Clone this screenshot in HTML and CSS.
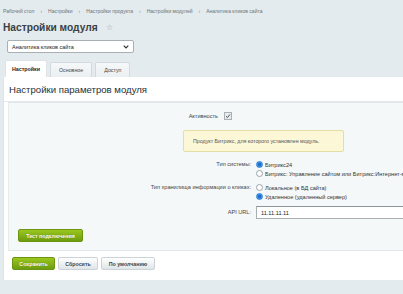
FILE: index.html
```html
<!DOCTYPE html>
<html lang="ru">
<head>
<meta charset="utf-8">
<link rel="stylesheet" href="styles.css">
</head>
<body>
<div class="page">
  <nav class="crumbs">
    <span>Рабочий стол</span><span class="sep">›</span>
    <span>Настройки</span><span class="sep">›</span>
    <span>Настройки продукта</span><span class="sep">›</span>
    <span>Настройки модулей</span><span class="sep">›</span>
    <span>Аналитика кликов сайта</span>
  </nav>
  <div class="title-row">
    <h1 class="title">Настройки модуля</h1>
    <span class="star">☆</span>
  </div>
  <div class="select-row">
    <div class="select">
      <span>Аналитика кликов сайта</span>
      <svg class="chev" width="6" height="4" viewBox="0 0 6 4"><path d="M0.7 0.7 L3 3 L5.3 0.7" fill="none" stroke="#333" stroke-width="1.2"/></svg>
    </div>
  </div>
  <div class="tabs">
    <div class="tab active">Настройки</div>
    <div class="tab">Основное</div>
    <div class="tab">Доступ</div>
  </div>
  <div class="panel">
    <div class="panel-head">Настройки параметров модуля</div>
    <div class="inner">
      <div class="row-active">
        <span class="lbl">Активность</span>
        <span class="check"><svg width="6" height="6" viewBox="0 0 6 6"><path d="M1 3.2 L2.5 4.6 L5 1.4" fill="none" stroke="#555" stroke-width="1"/></svg></span>
      </div>
      <div class="note">Продукт Битрикс, для которого установлен модуль.</div>
      <div class="form">
        <div class="flabel">Тип системы:</div>
        <div class="fval">
          <div class="opt"><span class="radio on"></span>Битрикс24</div>
          <div class="opt"><span class="radio"></span>Битрикс: Управление сайтом или Битрикс:Интернет-магазин</div>
        </div>
        <div class="flabel">Тип хранилища информации о кликах:</div>
        <div class="fval">
          <div class="opt"><span class="radio"></span>Локальное (в БД сайта)</div>
          <div class="opt"><span class="radio on"></span>Удаленное (удаленный сервер)</div>
        </div>
        <div class="flabel api">API URL:</div>
        <div class="fval"><div class="input">11.11.11.11</div></div>
      </div>
      <div class="test-row"><span class="btn green">Тест подключения</span></div>
    </div>
    <div class="actions">
      <span class="btn green">Сохранить</span>
      <span class="btn gray">Сбросить</span>
      <span class="btn gray">По умолчанию</span>
    </div>
  </div>
</div>
</body>
</html>
```
FILE: styles.css
```css
html, body {
  margin: 0;
  padding: 0;
  background: #e4ebee;
  overflow: hidden;
}
body {
  font-family: "Liberation Sans", Arial, sans-serif;
  color: #333;
}
.page {
  width: 520px;
  padding-top: 3px;
}
.crumbs {
  height: 16px;
  display: flex;
  align-items: center;
  padding-left: 3px;
  font-size: 5px;
  color: #6a7378;
}
.crumbs .sep {
  margin: 0 6px;
  color: #8a9296;
}
.title-row {
  display: flex;
  align-items: center;
  height: 17px;
  padding-left: 3px;
}
.title {
  margin: 0;
  font-size: 10.2px;
  font-weight: bold;
  color: #3a3f42;
}
.star {
  margin-left: 8px;
  font-size: 8px;
  color: #9aa3a8;
}
.select-row {
  margin-top: 4px;
  padding-left: 7px;
}
.select {
  width: 117px;
  height: 11px;
  border: 1px solid #a8b0b4;
  border-radius: 2px;
  background: #fff;
  display: flex;
  align-items: center;
  justify-content: space-between;
  padding: 0 4px;
  font-size: 5.5px;
  color: #222;
}
.chev { display: block; }
.tabs {
  margin-top: 8px;
  padding-left: 5px;
  display: flex;
  gap: 3px;
  height: 16px;
  align-items: flex-end;
}
.tab {
  height: 15px;
  padding: 0 8px;
  display: flex;
  align-items: center;
  font-size: 5.3px;
  color: #3e474c;
  background: linear-gradient(#f6f8f9, #eaeff1);
  border: 1px solid #d3dadd;
  border-bottom: none;
  border-radius: 2px 2px 0 0;
  box-sizing: border-box;
}
.tab.active {
  height: 17px;
  background: #fff;
  font-weight: bold;
  color: #222;
  border-color: #dde3e6;
  padding: 0 6px;
}
.panel {
  margin-left: 3px;
  background: #fff;
  height: 203px;
  border-left: 1px solid #dde3e6;
}
.panel-head {
  height: 25px;
  padding-left: 5px;
  display: flex;
  align-items: center;
  font-size: 9.6px;
  color: #2b2f31;
  border-bottom: 1px solid #e4e9eb;
  box-sizing: border-box;
}
.inner {
  margin-left: 4px;
  background: #f5f8f9;
  border-top: 1px solid #e1e6e8;
  border-left: 1px solid #e6ebed;
  border-bottom: 1px solid #e1e6e8;
  height: 149px;
  box-sizing: border-box;
  font-size: 5.6px;
  color: #333;
}
.row-active {
  display: flex;
  align-items: center;
  height: 12px;
  margin-top: 7px;
}
.row-active .lbl {
  width: 209px;
  text-align: right;
  color: #444;
}
.check {
  margin-left: 6px;
  width: 6px;
  height: 6px;
  border: 1px solid #a9b0b3;
  background: #e9eced;
  display: flex;
  align-items: center;
  justify-content: center;
}
.check svg { display: block; }
.note {
  margin: 8px 0 0 174px;
  width: 161px;
  height: 22px;
  box-sizing: border-box;
  background: #fbf7d7;
  border: 1px solid #e5dda6;
  border-radius: 2px;
  display: flex;
  align-items: center;
  padding-left: 9px;
  color: #555;
  font-size: 5.3px;
}
.form {
  margin-top: 8px;
  display: grid;
  grid-template-columns: 242px 1fr;
  column-gap: 5px;
  row-gap: 5px;
}
.flabel {
  text-align: right;
  line-height: 9px;
  color: #444;
  white-space: nowrap;
}
.flabel.api {
  line-height: 13px;
}
.opt {
  display: flex;
  align-items: center;
  height: 9px;
  white-space: nowrap;
  color: #333;
}
.radio {
  width: 5px;
  height: 5px;
  border-radius: 50%;
  border: 1px solid #9aa3a8;
  background: #fff;
  margin-right: 2px;
  box-sizing: content-box;
}
.radio.on {
  border-color: #2b82d9;
  background: radial-gradient(circle, #1e6fcc 0 45%, #3b92e6 55%);
}
.input {
  height: 13px;
  box-sizing: border-box;
  border: 1px solid #a9b0b4;
  border-top-color: #8d959a;
  background: #fff;
  display: flex;
  align-items: center;
  padding-left: 4px;
  color: #222;
  font-size: 5.6px;
}
.test-row {
  margin-top: 10px;
  padding-left: 9px;
}
.btn {
  display: inline-flex;
  align-items: center;
  justify-content: center;
  height: 13px;
  box-sizing: border-box;
  border-radius: 2px;
  font-size: 5.3px;
  font-weight: bold;
  padding: 0 6px;
}
.btn.green {
  color: #fff;
  background: linear-gradient(#9bc71f, #6c9b0f);
  border: 1px solid #6b9410;
  text-shadow: 0 0 1px rgba(0,0,0,0.3);
}
.test-row .btn { width: 65px; }
.btn.gray {
  color: #3c4649;
  background: linear-gradient(#ffffff, #dfe5e8);
  border: 1px solid #ccd3d6;
}
.actions {
  display: flex;
  gap: 3px;
  padding: 6px 0 0 8px;
}
.actions .btn { height: 13px; }
.actions .btn:nth-child(1) { width: 43px; }
.actions .btn:nth-child(2) { width: 40px; }
.actions .btn:nth-child(3) { width: 54px; }
```
